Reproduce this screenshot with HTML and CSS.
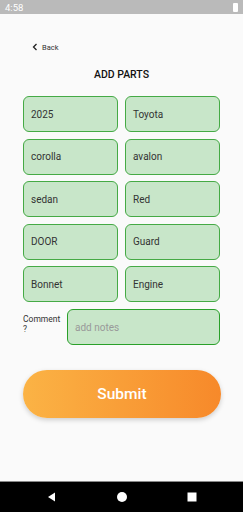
FILE: index.html
```html
<!DOCTYPE html>
<html>
<head>
<meta charset="utf-8">
<link rel="stylesheet" href="styles.css">
</head>
<body>
<div class="screen">
  <div class="status">
    <span class="time">4:58</span>
    <span class="battery"></span>
  </div>
  <div class="content">
    <div class="back">
      <svg class="chev" width="6" height="8" viewBox="0 0 6 8"><path d="M4.5 1 L1.5 4 L4.5 7" fill="none" stroke="#222" stroke-width="1.3"/></svg>
      <span>Back</span>
    </div>
    <h1 class="title">ADD PARTS</h1>
    <div class="grid">
      <div class="field">2025</div>
      <div class="field">Toyota</div>
      <div class="field">corolla</div>
      <div class="field">avalon</div>
      <div class="field">sedan</div>
      <div class="field">Red</div>
      <div class="field">DOOR</div>
      <div class="field">Guard</div>
      <div class="field">Bonnet</div>
      <div class="field">Engine</div>
    </div>
    <div class="comment-row">
      <div class="comment-label">Comment<br>?</div>
      <div class="field notes">add notes</div>
    </div>
    <button class="submit">Submit</button>
  </div>
  <div class="navbar">
    <svg width="12" height="12" viewBox="0 0 12 12"><path d="M9 1.5 L2 6 L9 10.5 Z" fill="#fff"/></svg>
    <svg width="12" height="12" viewBox="0 0 12 12"><circle cx="6" cy="6" r="5" fill="#fff"/></svg>
    <svg width="12" height="12" viewBox="0 0 12 12"><rect x="1.5" y="1.5" width="9" height="9" fill="#fff"/></svg>
  </div>
</div>
</body>
</html>
```
FILE: styles.css
```css
html, body {
  margin: 0;
  padding: 0;
  background: #fafafa;
  font-family: Roboto, "Noto Sans", sans-serif;
}
.screen {
  width: 243px;
  height: 512px;
  display: flex;
  flex-direction: column;
}
.status {
  height: 14px;
  background: #bababa;
  display: flex;
  align-items: center;
  justify-content: space-between;
  padding: 0 5px;
  color: #fff;
  font-size: 9.5px;
}
.battery {
  width: 5px;
  height: 9px;
  background: #fff;
  border-radius: 1px;
}
.content {
  flex: 1;
  padding: 0 23px;
  display: flex;
  flex-direction: column;
}
.back {
  margin-top: 29px;
  margin-left: 9px;
  height: 8px;
  display: flex;
  align-items: center;
  gap: 4px;
  font-size: 7.5px;
  color: #333;
}
.title {
  margin: 18px 0 0;
  text-align: center;
  font-size: 10.5px;
  font-weight: 500;
  color: #111;
  line-height: 12px;
}
.grid {
  margin-top: 15px;
  display: grid;
  grid-template-columns: 95px 95px;
  column-gap: 7px;
  row-gap: 6.5px;
}
.field {
  height: 36px;
  box-sizing: border-box;
  background: #c8e6c9;
  border: 1px solid #45aa45;
  border-radius: 6px;
  display: flex;
  align-items: center;
  padding-left: 7px;
  font-size: 10px;
  color: #333;
}
.comment-row {
  margin-top: 7px;
  display: flex;
  align-items: flex-start;
}
.comment-label {
  width: 44px;
  margin-top: 5px;
  font-size: 8.5px;
  line-height: 10px;
  color: #333;
}
.notes {
  width: 153px;
  color: #999;
  border-color: #2aa02a;
}
.submit {
  margin-top: 25px;
  height: 48px;
  width: 198px;
  border: none;
  border-radius: 24px;
  background: linear-gradient(90deg, #fbb345, #f7892a);
  color: #fff;
  font-family: Roboto, sans-serif;
  font-size: 15.5px;
  font-weight: 500;
  box-shadow: 0 2px 5px rgba(0,0,0,0.18);
}
.navbar {
  height: 30px;
  background: #000;
  border-top: 1px solid #888;
  display: flex;
  align-items: center;
  justify-content: center;
  gap: 58px;
}
```
